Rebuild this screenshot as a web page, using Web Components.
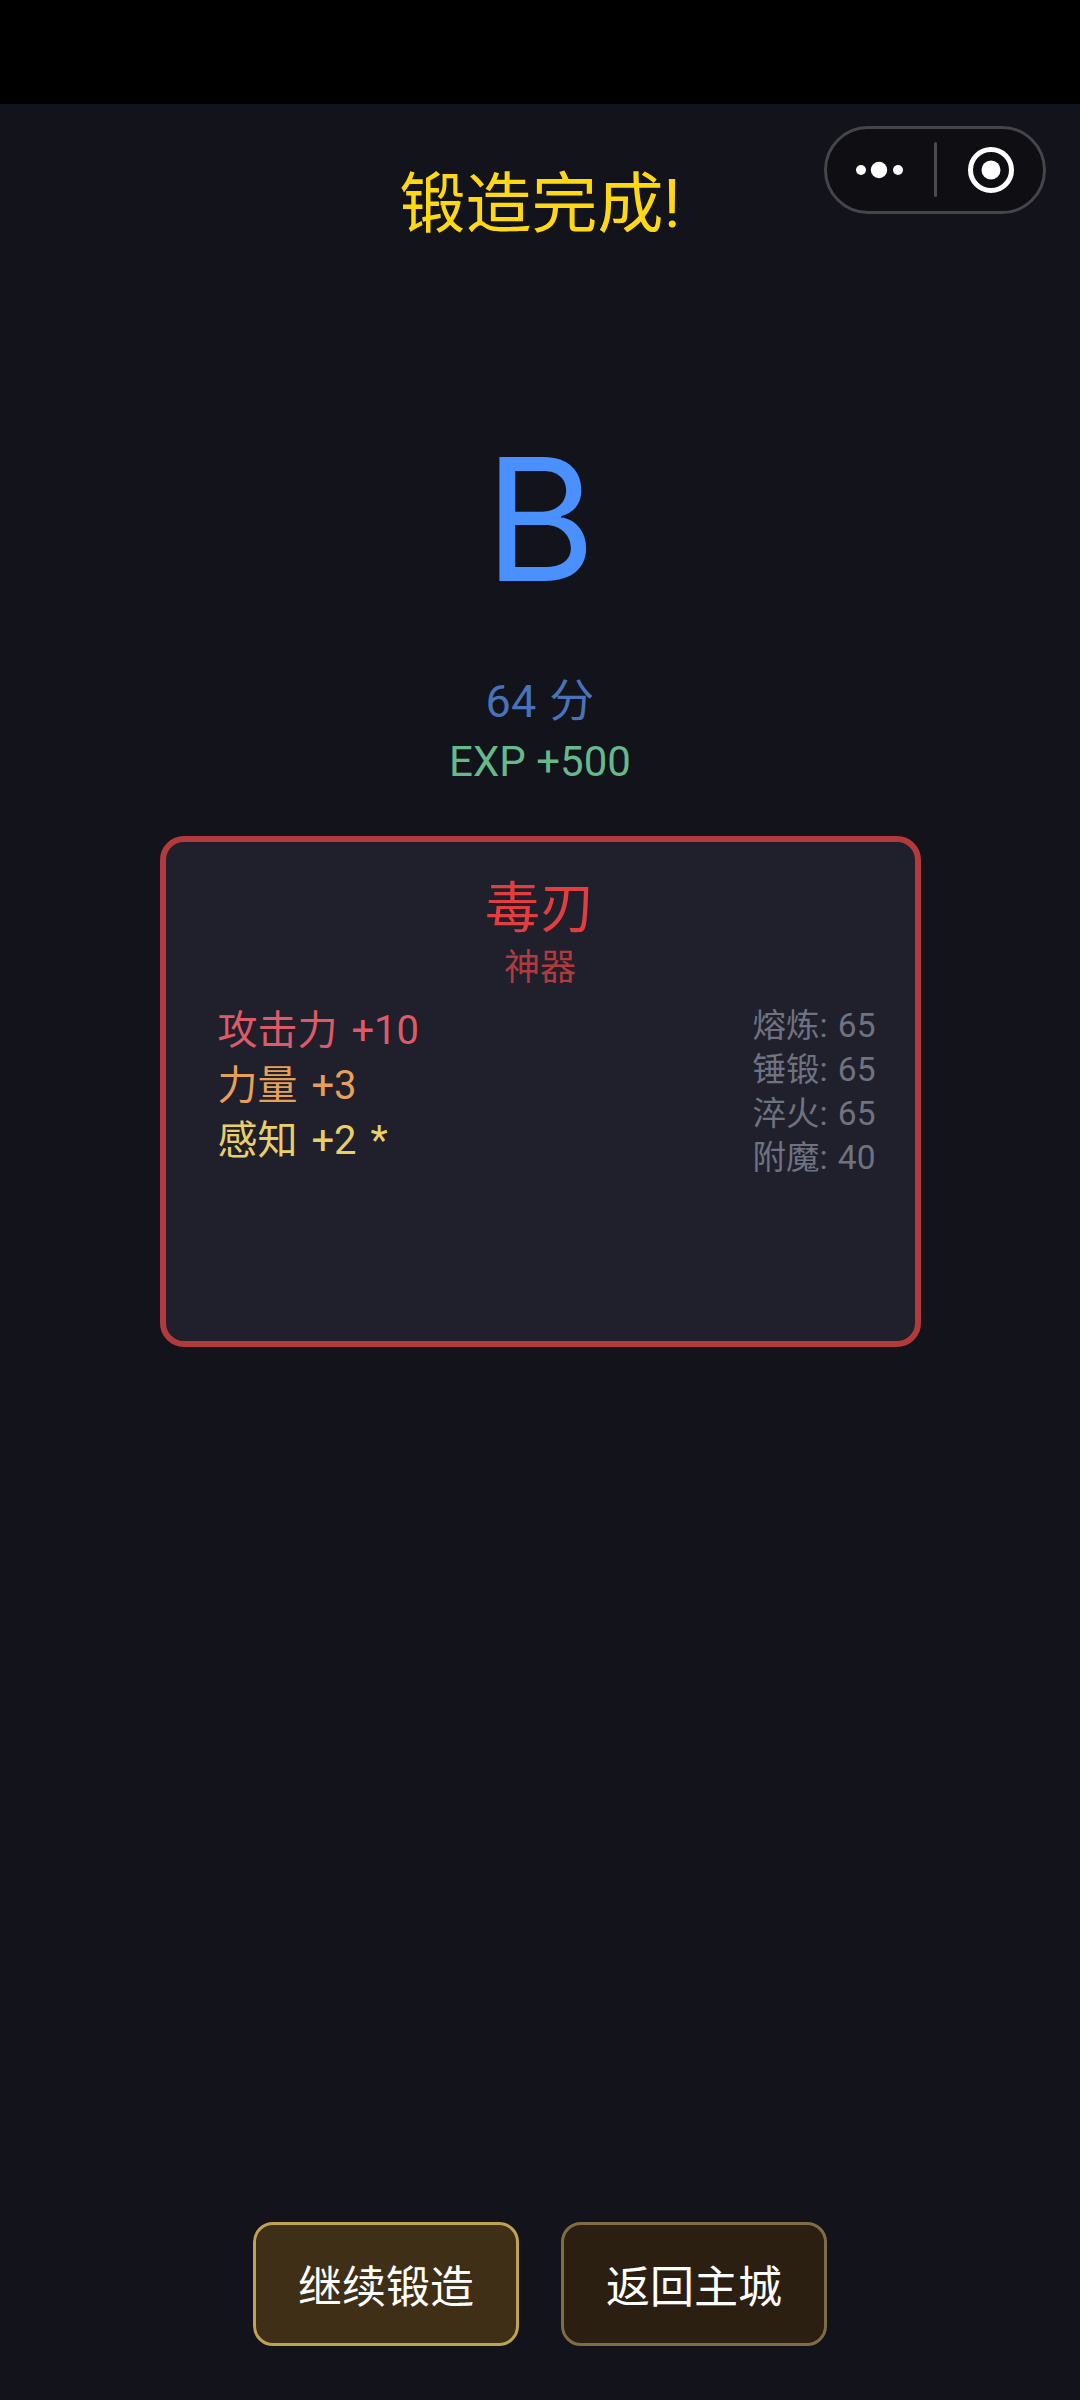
<!DOCTYPE html>
<html lang="zh-CN"><head><meta charset="utf-8"><title>锻造完成</title>
<style>
html,body{margin:0;padding:0;background:#12131b}
body{width:1080px;height:2400px;overflow:hidden;font-family:Roboto,"Noto Sans CJK SC",sans-serif}
</style></head><body>
<forge-app>
  <forge-title slot="top">锻造完成!</forge-title>
  <forge-grade slot="top" grade="B" score="64 分" exp="EXP +500"></forge-grade>
  <item-card slot="top" name="毒刃" rarity="神器">
    <stat-line slot="bonus" style="--c:#df5a68">攻击力 +10</stat-line>
    <stat-line slot="bonus" style="--c:#e89f58">力量 +3</stat-line>
    <stat-line slot="bonus" style="--c:#e9cf68">感知 +2 *</stat-line>
    <score-line slot="score">熔炼: 65</score-line>
    <score-line slot="score">锤锻: 65</score-line>
    <score-line slot="score">淬火: 65</score-line>
    <score-line slot="score">附魔: 40</score-line>
  </item-card>
  <forge-button slot="actions" primary>继续锻造</forge-button>
  <forge-button slot="actions">返回主城</forge-button>
</forge-app>
<script>
function def(name, css, html, after){
  customElements.define(name, class extends HTMLElement{
    constructor(){super();const r=this.attachShadow({mode:'open'});r.innerHTML='<style>'+css+'</style>'+html;}
    connectedCallback(){after&&after(this)}
  });
}
const FONT='Roboto,"Noto Sans CJK SC",sans-serif';
def('forge-app',`
 :host{display:flex;flex-direction:column;width:1080px;height:2400px;position:relative;background:#12131b;color:#fff;font-family:${FONT}}
 .status{height:104px;background:#000;flex:none}
 .top{display:flex;flex-direction:column;align-items:center;flex:1}
 .actions{display:flex;justify-content:center;gap:42px;padding-bottom:54px}
 .capsule{position:absolute;left:824px;top:126px;width:222px;height:88px;box-sizing:border-box;border:3px solid #45454b;border-radius:44px;background:#0e0e13;display:flex;align-items:center}
 .capsule svg{display:block}
`,`<div class="status"></div>
 <div class="top"><slot name="top"></slot></div>
 <div class="actions"><slot name="actions"></slot></div>
 <div class="capsule"><svg width="216" height="82" viewBox="0 0 216 82">
   <circle cx="34" cy="41" r="5" fill="#fff"/><circle cx="52" cy="41" r="8.2" fill="#fff"/><circle cx="71" cy="41" r="5" fill="#fff"/>
   <rect x="107" y="13" width="3" height="55" rx="1.5" fill="#4a4a50"/>
   <circle cx="164" cy="41" r="20.5" fill="none" stroke="#fff" stroke-width="5"/><circle cx="164" cy="41" r="9.5" fill="#fff"/>
 </svg></div>`);
def('forge-title',`:host{display:block;margin-top:63px;font-size:66px;line-height:76px;color:#ffd815;text-align:center}`,`<slot></slot>`);
def('forge-grade',`
 :host{display:flex;flex-direction:column;align-items:center}
 .g{font-family:Inter,sans-serif;font-size:170px;line-height:200px;margin-top:176px;color:#4a90ff;font-weight:400}
 .s{font-size:45px;line-height:60px;margin-top:53px;color:#4a72b8;word-spacing:2px}
 .e{font-size:42px;line-height:60px;color:#66b98a}
`,`<div class="g"></div><div class="s"></div><div class="e"></div>`,el=>{
  const r=el.shadowRoot;r.querySelector('.g').textContent=el.getAttribute('grade');
  r.querySelector('.s').textContent=el.getAttribute('score');
  r.querySelector('.e').textContent=el.getAttribute('exp');
});
def('item-card',`
 :host{display:block;box-sizing:border-box;width:761px;height:511px;margin-top:44px;background:#1f202c;border:6px solid #b23a3c;border-radius:24px;padding:36px 0 0}
 .n{font-size:55px;line-height:60px;text-align:center;color:#e23d3f}
 .r{font-size:36px;line-height:44px;text-align:center;color:#b03a3e;margin-top:8px}
 .row{display:flex;justify-content:space-between;align-items:flex-start;margin-top:13px;padding:0 39px 0 52px}
 .b,.sc{display:flex;flex-direction:column}
 .sc{align-items:flex-end;margin-top:1px}
`,`<div class="n"></div><div class="r"></div><div class="row"><div class="b"><slot name="bonus"></slot></div><div class="sc"><slot name="score"></slot></div></div>`,el=>{
  const r=el.shadowRoot;r.querySelector('.n').textContent=el.getAttribute('name');
  r.querySelector('.r').textContent=el.getAttribute('rarity');
});
def('stat-line',`:host{display:block;font-size:40px;line-height:55px;color:var(--c);word-spacing:4px}`,`<slot></slot>`);
def('score-line',`:host{display:block;font-size:33.5px;line-height:44px;color:#6f7280;word-spacing:2px}`,`<slot></slot>`);
def('forge-button',`
 :host{display:flex;align-items:center;justify-content:center;box-sizing:border-box;width:266px;height:124px;border:3px solid #7f6d45;border-radius:20px;background:#2b1f12;color:#fff;font-size:44px}
 :host([primary]){border-color:#c0a253;background:#402f17}
`,`<slot></slot>`);
</script>
</body></html>
